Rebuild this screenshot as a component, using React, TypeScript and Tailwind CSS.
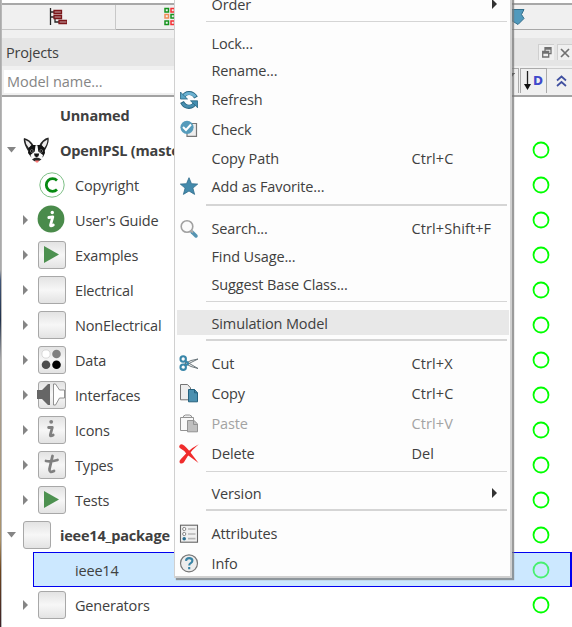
import React from 'react';

type IconName = string;

function Frame({ children }: { children?: React.ReactNode }) {
  return (
    <svg width="28" height="28" viewBox="0 0 28 28" className="shrink-0 overflow-visible">
      <defs>
        <linearGradient id="tile" x1="0" y1="0" x2="0" y2="1">
          <stop offset="0" stopColor="#e2e2e2" />
          <stop offset="0.5" stopColor="#f7f7f7" />
          <stop offset="1" stopColor="#e2e2e2" />
        </linearGradient>
      </defs>
      <rect x="0.5" y="0.5" width="27" height="27" rx="2.5" fill="url(#tile)" stroke="#a8a8a8" />
      {children}
    </svg>
  );
}

function TreeIcon({ name }: { name: IconName }) {
  switch (name) {
    case 'dog':
      return (
        <svg width="28" height="28" viewBox="0 0 28 28" className="shrink-0">
          <path d="M1 2Q-.3 6 5 15l6-5Q7 3 1 2ZM25.5 1.5q1.2 5-4 13.5l-5.500-5q3-7 9.500-8.500Z" fill="#252525" />
          <path d="M2.300 4q0 4 3.500 8l2.500-3Q6 5 2.300 4ZM24.400 3.500q0 5-3.200 8.500l-2.500-3q2-4 5.700-5.500Z" fill="#eceaea" />
          <path d="M5.500 12l4-3h3l1 .8 1-.8h3l4 3 .5 5-2 4-6 3-6-3-3-4Z" fill="#121212" />
          <path d="M12.500 9.500h2l.8 6 4.700 3.500-1 4-5 1.500-5-1.500-1.500-4 4.200-3.500Z" fill="#fafafa" />
          <circle cx="8.800" cy="15" r="1.400" fill="#000" stroke="#aaa" strokeWidth=".6" />
          <circle cx="18.200" cy="15" r="1.400" fill="#000" stroke="#aaa" strokeWidth=".6" />
          <path d="M11 17.500h5.200l-.7 2.700-1.900 1-1.900-1Z" fill="#111" />
          <path d="M9 23.500q4.500-4 9.500 0l-3 1.700h-4Z" fill="#272727" />
          <path d="M12 24.500h4l-1 2h-2Z" fill="#ff7774" />
        </svg>
      );
    case 'copyright':
      return (
        <svg width="28" height="28" viewBox="0 0 28 28" className="shrink-0">
          <circle cx="14" cy="14" r="12.2" fill="#fff" stroke="#6fb878" strokeWidth=".9" />
          <path d="M19 9.5A6.3 6.3 0 1 0 19 18.5" fill="none" stroke="#078a12" strokeWidth="2.8" />
        </svg>
      );
    case 'guide':
      return (
        <svg width="28" height="28" viewBox="0 0 28 28" className="shrink-0 overflow-visible">
          <circle cx="13" cy="13" r="13.4" fill="#4a8b4b" />
          <circle cx="14.3" cy="6.5" r="1.7" fill="#fff" />
          <path d="M10.8 11.5l4-.7-2.2 8q-.4 2 2.7.2" fill="none" stroke="#fff" strokeWidth="2.8" strokeLinecap="round" strokeLinejoin="round" />
        </svg>
      );
    case 'play':
      return <Frame><path d="M6 5l15 8.5L6 22Z" fill="#4d9150" /></Frame>;
    case 'data':
      return (
        <Frame>
          <circle cx="8" cy="8" r="4.1" fill="#fff" stroke="#ccc" strokeWidth=".7" />
          <circle cx="18.5" cy="8" r="4.3" fill="#808080" />
          <circle cx="8" cy="18.7" r="4.3" fill="#4d4d4d" />
          <circle cx="18.5" cy="18.7" r="4.3" fill="#000" />
        </Frame>
      );
    case 'interface':
      return (
        <Frame>
          <path d="M-1 9h5l6-6h2v21h-2l-6-6h-5Z" fill="#666" />
          <path d="M15.5 3h2l4 6h5v8h-5l-4 7h-2Z" fill="#fff" stroke="#777" strokeWidth=".8" />
        </Frame>
      );
    case 'i':
      return (
        <Frame>
          <circle cx="13.2" cy="5.8" r="1.9" fill="#808080" />
          <path d="M10.6 11.5h3.7l-1.9 7q-.5 2.500 2.8.5" fill="none" stroke="#808080" strokeWidth="2.8" strokeLinecap="round" strokeLinejoin="round" />
        </Frame>
      );
    case 't':
      return (
        <Frame>
          <path d="M14.5 5l-3 13q-.5 4.500 4.5 2M8 10q5 1 11.500-1" fill="none" stroke="#808080" strokeWidth="2.8" strokeLinecap="round" />
        </Frame>
      );
    case 'empty':
      return <Frame />;
    default:
      return <span className="w-7 shrink-0" />;
  }
}

function MenuIcon({ name }: { name: IconName }) {
  const base = { width: 22, height: 22, viewBox: '0 0 22 22', fill: 'none' };
  switch (name) {
    case 'refresh':
      return (
        <svg {...base}>
          <path d="M5 8.500Q7 4 11 4q4.500 0 7 4.500" stroke="#286681" strokeWidth="4.200" />
          <path d="M5 8.500Q7 4.300 11 4.300q4 0 6.500 3.500" stroke="#6db3d3" strokeWidth="2.700" />
          <path d="M2.500 3v7h7L7 7.700Z" fill="#5aa5c6" stroke="#286681" strokeWidth=".8" />
          <path d="M17.500 13q-2 4.800-6.500 4.800T4 13" stroke="#286681" strokeWidth="4.200" />
          <path d="M17.500 13q-2 4.500-6.500 4.500t-6.500-3.700" stroke="#498fb0" strokeWidth="2.700" />
          <path d="M12.500 11.800h7v7L17 16Z" fill="#438eb1" stroke="#286681" strokeWidth=".8" />
        </svg>
      );
    case 'check':
      return (
        <svg {...base}>
          <path d="M7 4.5h11.500v12.800H9V12" fill="#eee" stroke="#777" strokeWidth="1.2" />
          <circle cx="9" cy="8.3" r="6.6" fill="#559bbb" />
          <path d="M5 8l3 3 5-5.500" stroke="#fff" strokeWidth="2" />
        </svg>
      );
    case 'star':
      return <svg {...base}><path d="M11 1.700l2.500 6 6.200.4-4.800 4 1.700 6.300L11 15l-5.600 3.400 1.700-6.300-4.800-4 6.200-.4Z" fill="#438aac" stroke="#306c8b" strokeWidth=".8" /></svg>;
    case 'search':
      return (
        <svg {...base}>
          <path d="M14 14l4 4" stroke="#5594b2" strokeWidth="3.500" strokeLinecap="round" />
          <circle cx="9" cy="8.5" r="5.8" fill="#fbfbfb" stroke="#a1a1a1" strokeWidth="1.6" />
          <path d="M13 12.500l2 2" stroke="#aaa" strokeWidth="2" />
        </svg>
      );
    case 'cut':
      return (
        <svg {...base}>
          <path d="M8 8.500l12 7-7-2-6-3ZM8 12l12-6-7 1.500-6 3Z" fill="#eee" stroke="#606c72" strokeWidth=".9" />
          <circle cx="5.2" cy="6" r="2.7" stroke="#3986a9" strokeWidth="2.1" />
          <circle cx="5.2" cy="14.2" r="2.7" stroke="#3986a9" strokeWidth="2.1" />
          <path d="M7 8q4 2 3 3t-3 1" stroke="#3986a9" strokeWidth="2" />
        </svg>
      );
    case 'copy':
      return (
        <svg {...base}>
          <path d="M2.500 1.500h7l3 3.300v12h-10Z" fill="#eee" stroke="#747474" />
          <path d="M10.500 6.500h6l3 3.300v9h-9Z" fill="#4b90b0" stroke="#25617e" />
          <path d="M16.500 6.500v3.300h3" stroke="#25617e" />
        </svg>
      );
    case 'paste':
      return (
        <svg {...base}>
          <path d="M2.500 4.500h13v13h-13Z" fill="#f8f8f8" stroke="#929292" />
          <path d="M5.500 4.500V3l2-1h4l2 1v1.500Z" fill="#eee" stroke="#929292" />
          <path d="M9.500 7.500h6.500l3.500 3.300v8h-10Z" fill="#bfbfbf" stroke="#929292" />
          <path d="M15.500 7.500v4h4" stroke="#929292" />
        </svg>
      );
    case 'delete':
      return (
        <svg {...base}>
          <path d="M1.200 3.200Q2 .6 4.500 1.500 7.500 3 12.500 9.500L20.500 20 9 11.500Q6 7 2.500 5.500.9 4.800 1.200 3.200Z" fill="#f02c2c" />
          <path d="M20.800 1.200Q13.500 7 9.500 13.500l-3.700 6Q3.500 21.500 1.700 19.700.8 18.300 2.700 16.300L9 9.500q5-5 11.800-8.300Z" fill="#f02c2c" />
        </svg>
      );
    case 'attributes':
      return (
        <svg {...base}>
          <rect x="2.5" y="2.2" width="17" height="17" fill="#f0f0f0" stroke="#666" strokeWidth="1.1" />
          <path d="M10 6h7.500M10 11h7.500M10 15.700h7.500" stroke="#b5b5b5" strokeWidth="1.7" />
          <circle cx="6.2" cy="6" r="1.6" fill="#fff" stroke="#888" />
          <circle cx="6.2" cy="11" r="1.6" fill="#fff" stroke="#888" />
          <circle cx="6.2" cy="15.7" r="1.8" fill="#286d90" />
        </svg>
      );
    case 'info':
      return (
        <svg {...base}>
          <circle cx="11" cy="10.3" r="8.5" fill="#ededed" stroke="#777" strokeWidth="1.2" />
          <path d="M8 7.800q.2-2.700 3.100-2.700 3.300 0 3.300 2.600 0 1.400-1.700 2.500-1.500.9-1.500 2.200M11.200 14v2.200" stroke="#3984a5" strokeWidth="2.1" />
        </svg>
      );
    default:
      return null;
  }
}

interface Row { label: string; icon?: string; depth: number; arrow?: 'down' | 'right'; selected?: boolean }
const rows: Row[] = [
  { label: 'Unnamed', depth: 0 },
  { label: 'OpenIPSL (master)', icon: 'dog', depth: 0, arrow: 'down' },
  { label: 'Copyright', icon: 'copyright', depth: 1 },
  { label: "User's Guide", icon: 'guide', depth: 1, arrow: 'right' },
  { label: 'Examples', icon: 'play', depth: 1, arrow: 'right' },
  { label: 'Electrical', icon: 'empty', depth: 1, arrow: 'right' },
  { label: 'NonElectrical', icon: 'empty', depth: 1, arrow: 'right' },
  { label: 'Data', icon: 'data', depth: 1, arrow: 'right' },
  { label: 'Interfaces', icon: 'interface', depth: 1, arrow: 'right' },
  { label: 'Icons', icon: 'i', depth: 1, arrow: 'right' },
  { label: 'Types', icon: 't', depth: 1, arrow: 'right' },
  { label: 'Tests', icon: 'play', depth: 1, arrow: 'right' },
  { label: 'ieee14_package', icon: 'empty', depth: 0, arrow: 'down' },
  { label: 'ieee14', depth: 1, selected: true },
  { label: 'Generators', icon: 'empty', depth: 1, arrow: 'right' },
];

function TreeRow({ row }: { row: Row }) {
  return (
    <div className="flex h-[35px] shrink-0 items-center">
      <div className={row.depth ? 'flex w-[31px] shrink-0 justify-end pr-[4px]' : 'flex w-[21px] shrink-0 pl-[5px]'}>
        {row.arrow === 'down' && <svg width="10" height="6" viewBox="0 0 10 6"><path d="M0 0h9L4.5 5.5Z" fill="#858585" /></svg>}
        {row.arrow === 'right' && <svg width="7" height="10" viewBox="0 0 7 10"><path d="M1 0l5 5-5 5Z" fill="#858585" /></svg>}
      </div>
      <div className={`flex h-[35px] min-w-0 grow items-center pt-px ${row.selected ? 'border border-r-2 border-[#0000f0] bg-[#cce8ff] pl-[4px]' : row.depth ? 'pl-[5px]' : ''}`}>
        <TreeIcon name={row.icon ?? ''} />
        <span className={`grow whitespace-nowrap pl-[9px] pt-px ${row.depth ? 'text-[14.5px] tracking-[-0.18px]' : 'text-[14.5px] font-bold tracking-[-0.2px]'}`}>{row.label}</span>
        {row.label !== 'Unnamed' && (
          <svg width="18" height="18" viewBox="0 0 18 18" className={row.selected ? 'mr-[20px] shrink-0' : 'mr-[22px] shrink-0'}>
            <circle cx="9" cy="9" r="7.5" fill="none" stroke={row.selected ? '#48f070' : '#00ff00'} strokeWidth="1.8" />
          </svg>
        )}
      </div>
    </div>
  );
}

interface Item { label?: string; icon?: string; key?: string; h: string; sub?: boolean; off?: boolean; hot?: boolean; line?: string }
const items: Item[] = [
  { label: 'Order', h: 'h-[26px]', sub: true },
  { h: 'h-[12px] pt-[3px]', line: 'h-px' },
  { label: 'Lock...', h: 'h-[28px]' },
  { label: 'Rename...', h: 'h-[27px] pb-px' },
  { label: 'Refresh', icon: 'refresh', h: 'h-[30px]' },
  { label: 'Check', icon: 'check', h: 'h-[30px]' },
  { label: 'Copy Path', key: 'Ctrl+C', h: 'h-[28px]' },
  { label: 'Add as Favorite...', icon: 'star', h: 'h-[28px]' },
  { h: 'h-[14px] pt-[3px]', line: 'h-0.5' },
  { label: 'Search...', icon: 'search', key: 'Ctrl+Shift+F', h: 'h-[28px]' },
  { label: 'Find Usage...', h: 'h-[28px]' },
  { label: 'Suggest Base Class...', h: 'h-[28px]' },
  { h: 'h-[11px] pt-[2px]', line: 'h-px' },
  { label: 'Simulation Model', h: 'h-[25px] pt-[2px]', hot: true },
  { h: 'h-[14px] pt-[4px]', line: 'h-0.5' },
  { label: 'Cut', icon: 'cut', key: 'Ctrl+X', h: 'h-[30px]' },
  { label: 'Copy', icon: 'copy', key: 'Ctrl+C', h: 'h-[30px]' },
  { label: 'Paste', icon: 'paste', key: 'Ctrl+V', h: 'h-[30px]', off: true },
  { label: 'Delete', icon: 'delete', key: 'Del', h: 'h-[30px]' },
  { h: 'h-[10px] pt-[2px]', line: 'h-px' },
  { label: 'Version', h: 'h-[30px]', sub: true },
  { h: 'h-[10px]', line: 'h-0.5' },
  { label: 'Attributes', icon: 'attributes', h: 'h-[30px]' },
  { label: 'Info', icon: 'info', h: 'h-[27px] pt-[2px]' },
];

function ContextMenu() {
  return (
    <div className="absolute left-[174px] top-[-8px] flex h-[586px] w-[338px] flex-col border-b-2 border-l border-r-2 border-[#d0d0d0] bg-[#fdfdfd] pl-[2px] pr-px text-[14.5px] shadow-[2px_2px_1px_#777b]">
      {items.map((item, i) => item.line ? (
        <div key={i} className={`${item.h} shrink-0 pl-[29px] pr-[2px]`}><div className={`${item.line} bg-[#d5d5d5]`} /></div>
      ) : (
        <div key={i} className={`flex ${item.h} shrink-0 items-center ${item.hot ? 'bg-[#e8e8e8]' : ''} ${item.off ? 'text-[#a3a3a3]' : ''}`}>
          <span className="flex w-[34.5px] shrink-0 pl-px"><MenuIcon name={item.icon ?? ''} /></span>
          <span className="w-[200px] shrink-0 whitespace-nowrap tracking-[-0.13px]">{item.label}</span>
          <span className="grow whitespace-nowrap tracking-[0.1px]">{item.key}</span>
          {item.sub && <svg width="6" height="10" viewBox="0 0 6 10" className="mr-[11px] -mt-0.5"><path d="M0 0l5 5-5 5Z" fill="#333" /></svg>}
        </div>
      ))}
    </div>
  );
}

export default function App() {
  return (
    <main className="relative flex h-[627px] w-[572px] overflow-hidden bg-[#f0f0f0] text-[#404040] [font-family:'Open_Sans','Noto_Sans',sans-serif]">
      <div className="w-[2px] shrink-0 border-r border-[#b8b8b8] bg-[linear-gradient(#aaa_0px,#aaa_270px,#425779_280px,#20304a_320px,#aaa_360px,#a99c89_420px,#aa9168_540px,#6e451d_570px,#3b2027_627px)]" />
      <section className="flex min-w-0 grow flex-col">
        <div className="h-[5px] shrink-0 border-b-2 border-[#a8a8a8] bg-white" />
        <div className="flex h-[25px] shrink-0">
          <div className="flex w-[114px] items-center justify-center border-b border-r border-[#c8c8c8]">
            <svg width="18" height="18" viewBox="0 0 18 18" fill="none" className="-ml-px">
              <path d="M1.5 0v17M2 4h3M2 9h3M6 10v4h4" stroke="#252525" strokeWidth="1.3" />
              <path d="M5 2.500h7.500v3H5ZM5 7.500h7.500v3H5ZM10 12.500h8v3h-8Z" fill="#ad7678" stroke="#7c171b" strokeWidth="1.3" />
            </svg>
          </div>
          <div className="flex grow items-center border-b border-[#a8a8a8] pl-[48px]">
            <svg width="18" height="18" viewBox="0 0 18 18" fill="none" strokeWidth="1.5" className="overflow-visible">
              <path d="M1 .5h3.500V4H1ZM7 6.500h3.500V10H7Z" stroke="#16931e" />
              <path d="M7 .5h3.500V4H7ZM7 13h3.500v3.500H7Z" stroke="#f33035" />
              <path d="M1 6.500h3.500V10H1Z" stroke="#f18c56" />
              <path d="M1 13h3.500v3.500H1Z" stroke="#16931e" />
            </svg>
            <svg width="15" height="16" viewBox="0 0 15 16" className="ml-[328px]"><path d="M0 .5h14l-2.500 5 2.500 4-6 6-8-5Z" fill="#519abd" stroke="#346f8b" /></svg>
          </div>
        </div>
        <div className="mt-[8px] flex h-[28px] shrink-0 items-center bg-[#e5e5e5] pl-[4px]">
          <h1 className="mt-0.5 grow text-[14.5px] tracking-[-0.2px]">Projects</h1>
          <span className="mr-[3px] flex h-4 w-4 items-center justify-center border-l border-t border-[#cfcfcf] bg-[#f0f0f0]">
            <svg width="10" height="11" viewBox="0 0 10 11" fill="none" stroke="#707070" strokeWidth="1.3"><path d="M3 4V.7h6v6H6M3 2h6M.7 4.500h6V10h-6ZM1 6h5" /></svg>
          </span>
          <span className="flex h-4 w-[15px] items-center justify-center border-l border-t border-[#cfcfcf] bg-[#f0f0f0]">
            <svg width="10" height="10" viewBox="0 0 10 10" stroke="#707070" strokeWidth="1.7"><path d="M1 1l8 8M9 1L1 9" /></svg>
          </span>
        </div>
        <div className="mt-[2px] flex h-[27px] shrink-0 pl-[2px]">
          <div className="my-[2px] flex w-[506px] items-center bg-white pl-[3px] pt-px text-[14.5px] tracking-[-0.05px] text-[#858585]">Model name...</div>
          <div className="flex h-[25px] w-[9px] justify-end border-r border-t border-[#aaa] pr-[3px] pt-[4px]">
            <svg width="8" height="6" viewBox="0 0 8 6" className="shrink-0"><path d="M0 0h8L4 5Z" fill="#222" /></svg>
          </div>
          <div className="ml-px flex h-[25px] w-[27px] items-center justify-center border-x border-t border-[#aaa]">
            <svg width="7" height="20" viewBox="0 0 7 20" fill="none"><path d="M3.500 0v17" stroke="#222" strokeWidth="1.3" /><path d="M0 13h7l-3.500 6Z" fill="#111" /></svg>
            <b className="ml-0.5 text-[12px] leading-none text-[#3f49cb] [font-family:'DejaVu_Sans',sans-serif]">D</b>
          </div>
          <div className="flex h-[25px] grow items-center justify-center border-t border-[#ccc] pl-1">
            <svg width="11" height="12" viewBox="0 0 11 12" fill="none" stroke="#4050a0" strokeWidth="1.7"><path d="M1 5.500l4.500-4 4.500 4M1 11l4.500-4 4.500 4" /></svg>
          </div>
        </div>
        <div className="h-[2px] shrink-0 bg-[#a2a2a2]" />
        <div className="flex grow flex-col bg-white">
          {rows.map((row) => <TreeRow key={row.label} row={row} />)}
        </div>
      </section>
      <ContextMenu />
    </main>
  );
}
